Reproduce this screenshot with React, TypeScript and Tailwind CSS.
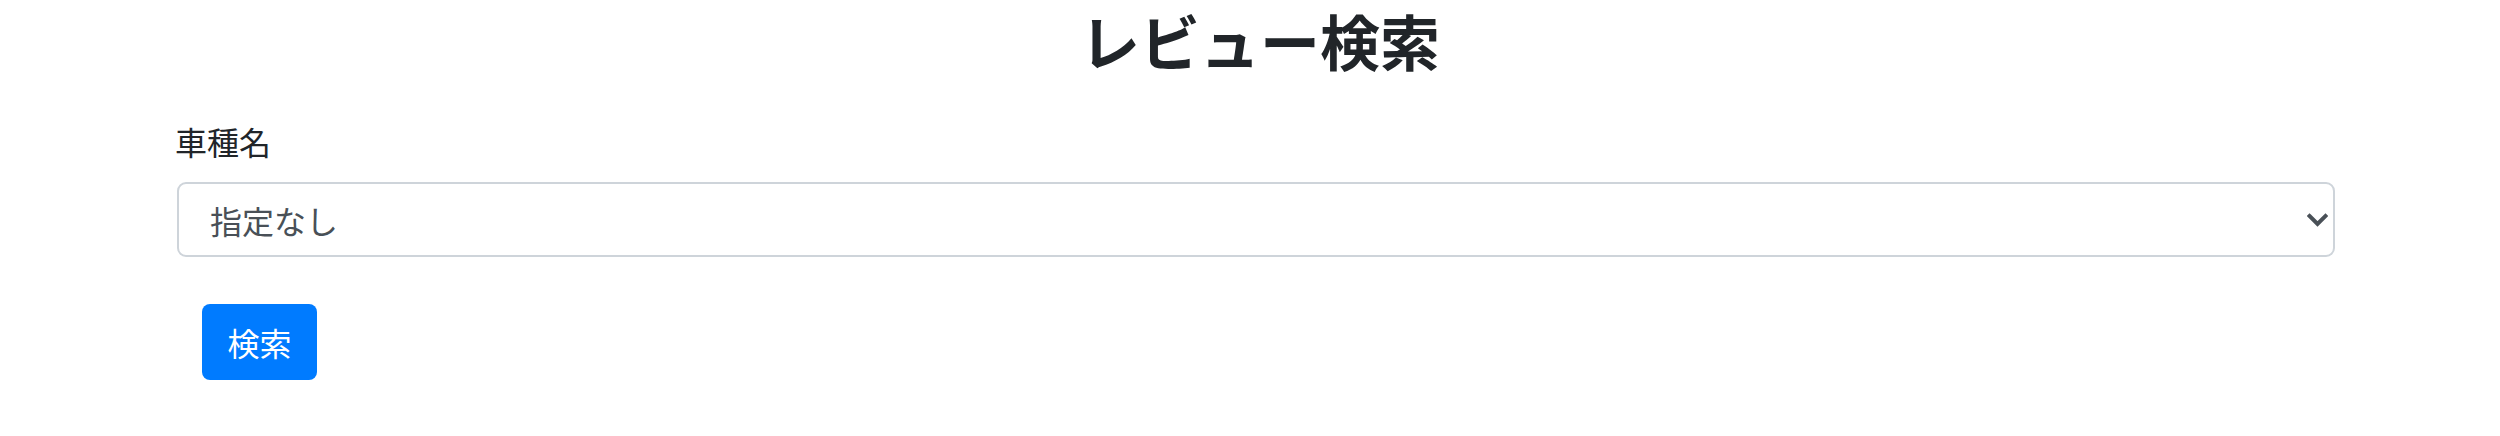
import React from "react";

export default function App() {
  const font = { fontFamily: '"Noto Sans CJK JP", "Noto Sans", sans-serif' };
  return (
    <div className="w-[2500px] h-[436px] bg-white text-[#212529]" style={font}>
      <div className="flex flex-col pl-[177px] pr-[165px]">
        <h1 className="h-[80px] leading-[80px] text-center text-[60px] font-bold text-[#212529] pl-[8px]">
          レビュー検索
        </h1>
        <label className="mt-[37px] h-[48px] leading-[48px] text-[32px] text-[#212529] -ml-[2px]">
          車種名
        </label>
        <div className="relative mt-[17px] h-[75px]">
          <select
            className="appearance-none w-full h-[75px] rounded-[9px] border-2 border-[#ced4da] bg-white pl-[31px] pr-[60px] text-[32px] text-[#495057] outline-none"
            style={font}
            defaultValue="none"
          >
            <option value="none">指定なし</option>
          </select>
          <svg
            className="absolute right-[7px] top-[31px] pointer-events-none"
            width="21"
            height="15"
            viewBox="0 0 21 15"
          >
            <path d="M2.5 3 L10.5 11 L18.5 3" fill="none" stroke="#495057" strokeWidth="4" strokeLinecap="square" strokeLinejoin="miter" />
          </svg>
        </div>
        <div className="mt-[47px] ml-[25px]">
          <button
            className="h-[76px] w-[115px] rounded-[8px] bg-[#007bff] text-white text-[32px] leading-[48px]"
            style={font}
          >
            検索
          </button>
        </div>
      </div>
    </div>
  );
}
